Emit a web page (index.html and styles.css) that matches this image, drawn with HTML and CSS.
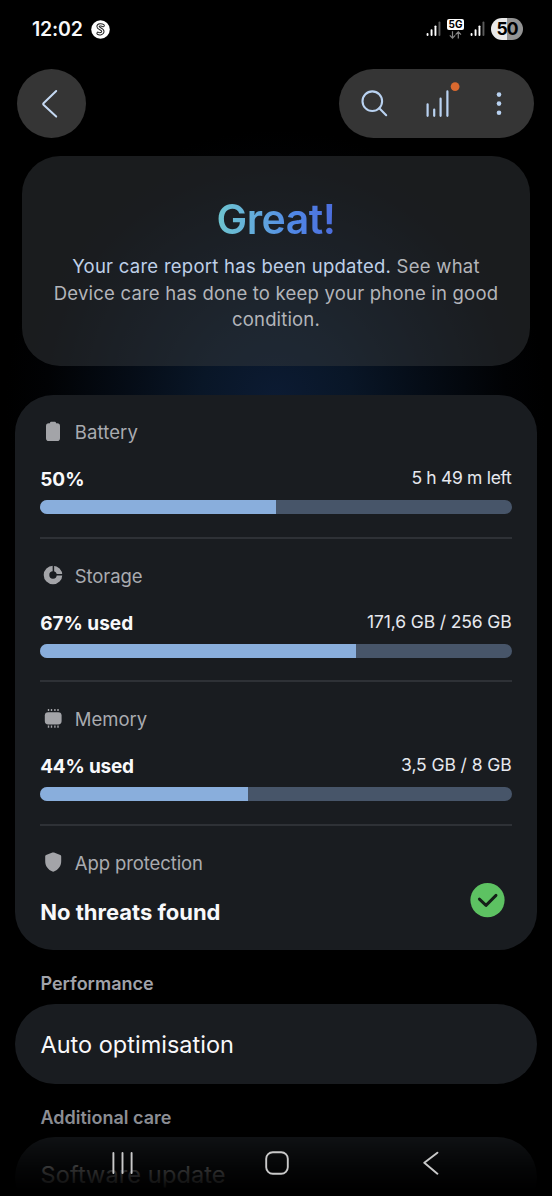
FILE: index.html
```html
<!DOCTYPE html>
<html lang="en">
<head>
<meta charset="utf-8">
<title>Device care</title>
<link rel="stylesheet" href="styles.css">
</head>
<body>
<div class="screen">
  <header class="status">
    <div class="status-left">
      <span class="clock">12:02</span>
      <svg class="app-badge" width="19" height="19" viewBox="0 0 19 19"><circle cx="9.5" cy="9.5" r="9.3" fill="#fff"/><g fill="none" stroke-linecap="round" stroke-linejoin="round"><path d="M12.2 5.6C10.6 4.5 7 4.6 7 6.6C7 8.9 11.9 8.6 11.9 11.6C11.9 13.9 8.4 14.2 7 13.3" stroke="#222" stroke-width="3.2"/><path d="M12.2 5.6C10.6 4.5 7 4.6 7 6.6C7 8.9 11.9 8.6 11.9 11.6C11.9 13.9 8.4 14.2 7 13.3" stroke="#fff" stroke-width="1.3"/></g></svg>
    </div>
    <div class="status-right">
      <svg width="15" height="16" viewBox="0 0 15 16" fill="#fff"><rect x="0.6" y="12" width="1.9" height="3" rx=".9"/><rect x="4.6" y="8.2" width="1.9" height="6.8" rx=".9"/><rect x="8.5" y="4.4" width="1.9" height="10.6" rx=".9"/><rect x="12.5" y=".5" width="1.9" height="14.5" rx=".9" fill="#5a5a5a"/></svg>
      <div class="network">
        <span class="network-label">5G</span>
        <svg width="13" height="8" viewBox="0 0 13 8" fill="none" stroke="#858585" stroke-width="1.2"><path d="M3.5 .3V7M.8 4.4L3.5 7.1L6.2 4.4M9.3 7.6V1M6.6 3.6L9.3 .9L12 3.6"/></svg>
      </div>
      <svg width="15" height="16" viewBox="0 0 15 16" fill="#fff"><rect x="0.6" y="12" width="1.9" height="3" rx=".9"/><rect x="4.6" y="8.2" width="1.9" height="6.8" rx=".9"/><rect x="8.5" y="4.4" width="1.9" height="10.6" rx=".9"/><rect x="12.5" y=".5" width="1.9" height="14.5" rx=".9" fill="#5a5a5a"/></svg>
      <span class="battery-pill">50</span>
    </div>
  </header>

  <nav class="toolbar">
    <div class="round-button">
      <svg width="18" height="30" viewBox="0 0 18 30" fill="none" stroke="#c5d9f2" stroke-width="2" stroke-linecap="round" stroke-linejoin="round"><path d="M15.2 2L2.5 14.2Q1.7 15 2.5 15.8L15.2 27.6"/></svg>
    </div>
    <div class="actions">
      <svg width="28" height="28" viewBox="0 0 28 28" fill="none" stroke="#b9d2f1" stroke-width="2.1" stroke-linecap="round"><circle cx="11.3" cy="11.2" r="9.8"/><path d="M18.3 18.2L25.2 25.2"/></svg>
      <svg width="38" height="38" viewBox="0 0 38 38" stroke="#b9d2f1" stroke-width="2.2" stroke-linecap="round"><path d="M3.6 22.3V33.8M10.2 27.5V33.8M16.6 16.7V33.8M23.4 9.4V33.8"/><circle cx="31.1" cy="4.6" r="4.4" fill="#d9692f" stroke="none"/></svg>
      <svg width="6" height="24" viewBox="0 0 6 24" fill="#b9d2f1"><circle cx="3" cy="2.6" r="2.3"/><circle cx="3" cy="11.6" r="2.3"/><circle cx="3" cy="20.7" r="2.3"/></svg>
    </div>
  </nav>

  <section class="summary">
    <h1 class="grade">Great!</h1>
    <p class="report">
      <span class="line line-1"><span class="link">Your care report has been updated.</span> See what</span>
      <span class="line line-2">Device care has done to keep your phone in good</span>
      <span class="line line-3">condition.</span>
    </p>
  </section>

  <main class="stats">
    <section class="stat">
      <div class="stat-head">
        <svg width="26" height="26" viewBox="0 0 26 26" fill="#a3a4a8"><path d="M10 3.9Q10 2.7 11.2 2.7H14.8Q16 2.7 16 3.9V4.3H17.2Q20 4.3 20 7.1V19.3Q20 22.1 17.2 22.1H8.8Q6 22.1 6 19.3V7.1Q6 4.3 8.8 4.3H10Z"/></svg>
        <span class="name-battery">Battery</span>
      </div>
      <div class="stat-row"><strong>50%</strong><span class="value value-battery">5 h 49 m left</span></div>
      <div class="bar"><div class="fill" style="width:50%"></div></div>
    </section>
    <section class="stat">
      <div class="stat-head">
        <svg width="26" height="26" viewBox="0 0 26 26"><circle cx="13" cy="12" r="6.5" fill="none" stroke="#a3a4a8" stroke-width="5.6"/><path d="M13.4 1.8V11.8H23" fill="none" stroke="#191c20" stroke-width="1.5"/></svg>
        <span class="name-storage">Storage</span>
      </div>
      <div class="stat-row"><strong>67% used</strong><span class="value value-storage">171,6 GB / 256 GB</span></div>
      <div class="bar"><div class="fill" style="width:67%"></div></div>
    </section>
    <section class="stat">
      <div class="stat-head">
        <svg width="26" height="26" viewBox="0 0 26 26" fill="#a3a4a8"><rect x="4.8" y="6.2" width="16.8" height="12.2" rx="3.4"/><path d="M8.5 2.9V5M11.5 2.9V5M14.9 2.9V5M18 2.9V5M8.5 19.6V21.7M11.5 19.6V21.7M14.9 19.6V21.7M18 19.6V21.7" stroke="#a3a4a8" stroke-width="1.4"/></svg>
        <span class="name-memory">Memory</span>
      </div>
      <div class="stat-row"><strong class="used-memory">44% used</strong><span class="value value-memory">3,5 GB / 8 GB</span></div>
      <div class="bar"><div class="fill" style="width:44%"></div></div>
    </section>
    <section class="stat protection">
      <div class="stat-head">
        <svg width="26" height="26" viewBox="0 0 26 26" fill="#a3a4a8"><path d="M12.4 2.6Q13.2 2.2 14 2.6L20.3 4.9Q21.2 5.3 21.2 6.3V11.3C21.2 16.3 18.2 19.8 13.9 21.6Q13.2 21.9 12.5 21.6C8.2 19.8 5.2 16.3 5.2 11.3V6.3Q5.2 5.3 6.1 4.9Z"/></svg>
        <span class="name-protection">App protection</span>
      </div>
      <div class="verdict">
        <strong>No threats found</strong>
        <svg width="35" height="35" viewBox="0 0 35 35"><circle cx="17.5" cy="17.1" r="17.1" fill="#5dc262"/><path d="M9.4 16.1L16 22.4L26 12.4" fill="none" stroke="#142018" stroke-width="2.9" stroke-linecap="round" stroke-linejoin="round"/></svg>
      </div>
    </section>
  </main>

  <h2 class="group">Performance</h2>
  <div class="item"><span class="item-auto">Auto optimisation</span></div>
  <h2 class="group group-care">Additional care</h2>
  <div class="item item-last"><span class="item-update">Software update</span></div>

  <footer class="navbar">
    <svg width="24" height="24" viewBox="0 0 24 24" stroke="#c9c9c9" stroke-width="1.9" stroke-linecap="round"><path d="M2.4 2V22M11.5 2V22M20.6 2V22"/></svg>
    <svg width="24" height="24" viewBox="0 0 24 24" fill="none" stroke="#c9c9c9" stroke-width="1.9"><rect x="1.2" y="1.2" width="21.6" height="21.6" rx="6.6"/></svg>
    <svg width="24" height="24" viewBox="0 0 24 24" fill="none" stroke="#c9c9c9" stroke-width="1.9" stroke-linecap="round" stroke-linejoin="round"><path d="M18.4 1.7L5.3 11.8L18.4 22.7"/></svg>
  </footer>
</div>
</body>
</html>
```

FILE: styles.css
```css
* { box-sizing: border-box; }
body { margin: 0; background: #000; overflow: hidden; }
h1, h2, p { margin: 0; }
svg { display: block; flex: none; }
.screen {
  width: 552px;
  height: 1196px;
  overflow: hidden;
  background: radial-gradient(circle 270px at 276px 400px, #0c1b33 0, #091627 28%, #050c16 55%, #010204 85%, #000 100%) #000;
  font-family: Inter, "Noto Sans", sans-serif;
  color: #f8f8fa;
  white-space: nowrap;
}
.status {
  height: 69px;
  padding: 17px 29px 0 32px;
  display: flex;
  justify-content: space-between;
  align-items: flex-start;
}
.status-left, .status-right { display: flex; align-items: center; height: 24px; }
.status-left { gap: 8px; }
.clock { font-size: 19.5px; font-weight: 600; letter-spacing: -0.2px; }
.status-right > svg { margin-right: 6px; }
.network { width: 17px; margin-right: 6px; display: flex; flex-direction: column; align-items: center; gap: 1px; }
.network-label {
  width: 17px; height: 11px; border-radius: 2px;
  background: #fff; color: #000;
  font-size: 10px; line-height: 11px; font-weight: 700; text-align: center;
}
.battery-pill {
  width: 32px; height: 22px; border-radius: 11px;
  background: linear-gradient(90deg, #e9e9e9 50%, #939393 50%);
  color: #000; font-size: 17.5px; line-height: 22px; font-weight: 700; text-align: center;
  letter-spacing: -1px;
}
.toolbar { display: flex; justify-content: space-between; padding: 0 18px 0 17.4px; }
.round-button {
  width: 69px; height: 69px; border-radius: 50%;
  background: #353535;
  display: flex; align-items: center; justify-content: center;
  padding-right: 3px;
}
.actions {
  width: 195px; height: 69px; border-radius: 35px;
  background: #353535;
  display: flex; align-items: center;
  padding-left: 22px;
}
.actions svg:nth-child(2) { margin: 0 34px 6px 35px; }
.summary {
  margin: 18px 22px 0;
  height: 210px;
  padding-top: 38px;
  border-radius: 38px;
  background: rgba(50, 54, 58, .52);
  text-align: center;
}
.grade {
  width: max-content;
  margin: 0 auto;
  font-size: 41px; line-height: 50px; font-weight: 600; letter-spacing: -.45px;
  background: linear-gradient(90deg, #6ec5cf 0, #62a9dc 35%, #5087e6 65%, #4c6cdc 100%);
  -webkit-background-clip: text; background-clip: text;
  color: transparent;
}
.report { margin-top: 9px; font-size: 18.5px; line-height: 26.6px; color: #b3b5ba; }
.line { display: block; }
.line-1 { letter-spacing: .26px; }
.line-2 { letter-spacing: .21px; }
.line-3 { letter-spacing: .15px; }
.link { color: #bfd0e8; }
.stats {
  margin: 29px 15px 0;
  height: 555px;
  padding: 0 25.5px 0 25.2px;
  border-radius: 38px;
  background: #191c20;
}
.stat { height: 143.7px; border-bottom: 2px solid #2e3136; padding-top: 24px; }
.stat-head { display: flex; align-items: center; gap: 8.6px; height: 26px; font-size: 18.5px; color: #a9abb0; }
.name-battery { letter-spacing: .1px; }
.name-storage, .name-protection { letter-spacing: -.1px; }
.stat-row { display: flex; justify-content: space-between; height: 24px; line-height: 26px; margin-top: 22px; font-size: 19px; }
.stat-row strong { font-weight: 700; }
.used-memory { letter-spacing: -.2px; }
.value { font-size: 17.5px; color: #e6e8ee; line-height: 21px; }
.value-battery { letter-spacing: -.32px; }
.value-storage { letter-spacing: -.14px; }
.value-memory { letter-spacing: -.1px; }
.bar { height: 14px; border-radius: 7px; background: #475569; overflow: hidden; margin-top: 9px; }
.fill { height: 100%; background: #89aedc; }
.protection { border: 0; }
.verdict { display: flex; justify-content: space-between; padding: 7px 7px 0 0; font-size: 22px; }
.verdict strong { padding-top: 16px; font-weight: 700; }
.group { height: 53.5px; padding: 21px 0 0 40.5px; font-size: 18px; line-height: 25px; font-weight: 600; color: #a0a3aa; }
.group-care { height: 53px; padding-top: 20.5px; }
.item {
  margin: 0 15px; height: 80.5px; padding: 2px 0 0 25.5px;
  border-radius: 40px; background: #191c20;
  font-size: 23.5px; display: flex; align-items: center;
}
.item-last { padding-top: 0; padding-bottom: 5px; }
.item-update { letter-spacing: .12px; }
.navbar {
  position: fixed; left: 0; top: 1084px;
  width: 552px; height: 112px;
  padding: 67px 109px 0 110.5px;
  display: flex; justify-content: space-between;
  background: linear-gradient(180deg, transparent 0, rgba(0,0,0,.15) 35%, rgba(0,0,0,.5) 55%, rgba(0,0,0,.8) 75%, #000 96%);
}
```
